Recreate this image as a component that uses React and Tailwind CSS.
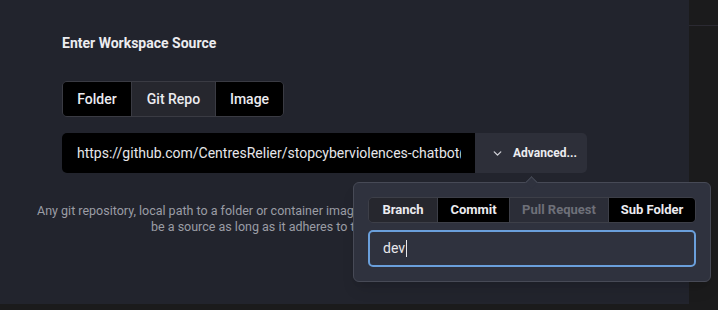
import React, { useState } from 'react';
import { ChevronDown } from 'lucide-react';

const font = { fontFamily: 'Roboto, "Noto Sans", sans-serif' };

function SourceTabs() {
    const [active, setActive] = useState('Git Repo');
    const tabs = [
        { name: 'Folder', w: 'w-[68px]' },
        { name: 'Git Repo', w: 'w-[84px]' },
        { name: 'Image', w: 'w-[68px]' },
    ];
    return (
        <div className="flex h-9 w-fit overflow-hidden rounded-[5px] border border-[#3a3b43]">
            {tabs.map((t, i) => (
                <button
                key={t.name}
                onClick={() => setActive(t.name)}
                className={
                    'text-[14px] font-medium text-[#ececf0] ' + t.w + ' ' +
                    (i > 0 ? 'border-l border-[#3a3b43] ' : '') +
                    (active === t.name ? 'bg-[#26272e]' : 'bg-black')
                }>
                    {t.name}
                </button>
            ))}
        </div>
    );
}

function AdvancedPopover() {
    const tabs = [
        { name: 'Branch', cls: 'w-[68px] bg-[#26272e] text-[#ececf0]' },
        { name: 'Commit', cls: 'w-[72px] bg-black text-[#ececf0]' },
        { name: 'Pull Request', cls: 'w-[99px] bg-[#2b2d37] text-[#6e7079]' },
        { name: 'Sub Folder', cls: 'flex-1 bg-black text-[#ececf0]' },
    ];
    return (
        <div className="absolute left-[-122px] top-[49px] z-10 w-[358px] rounded-[6px] border border-[#474a56] bg-[#2f323e] p-[14px] shadow-lg">
            <div className="absolute left-[173px] top-[-5px] h-[9px] w-[9px] rotate-45 border-l border-t border-[#474a56] bg-[#2f323e]" />
            <div className="flex h-[26px] overflow-hidden rounded-[5px] border border-[#3d3f48]">
                {tabs.map((t, i) => (
                    <div
                    key={t.name}
                    className={
                        'flex items-center justify-center text-[13px] font-bold ' +
                        (i > 0 ? 'border-l border-[#3d3f48] ' : '') +
                        t.cls
                    }>
                        {t.name}
                    </div>
                ))}
            </div>
            <div className="mt-[7px] flex h-[37px] items-center rounded-[5px] border-2 border-[#6a9fdb] bg-[#2f323e] px-[13px]">
                <span className="text-[14px] text-[#e8e8ec]">dev</span>
                <span className="ml-[1px] h-[17px] w-[1px] bg-[#e8e8ec]" />
            </div>
        </div>
    );
}

export default function App() {
    return (
        <div className="flex h-[310px] w-[718px] flex-col overflow-hidden bg-[#1b1b1c]" style={font}>
            <div className="flex flex-1">
                <div className="relative flex-1 bg-[#22242d] pl-[62px] pt-[33px]">
                    <h2 className="h-5 text-[14px] font-bold leading-5 text-[#ececf0]">Enter Workspace Source</h2>
                    <div className="mt-7">
                        <SourceTabs />
                    </div>
                    <div className="mt-4 flex h-10">
                        <div className="flex w-[413px] items-center overflow-hidden rounded-l-[5px] bg-black pl-[15px] pr-[14px]">
                            <span className="overflow-hidden whitespace-nowrap text-[14px] text-[#e6e6ea]">
                                https://github.com/CentresRelier/stopcyberviolences-chatbot@dev
                            </span>
                        </div>
                        <div className="relative">
                            <button className="flex h-10 w-[112px] items-center gap-[9px] rounded-r-[5px] bg-[#2d2f39] pl-[16px] text-[12px] font-bold text-[#ececf0]">
                                <ChevronDown size={13} strokeWidth={2.5} className="text-[#cfd0d6]" />
                                Advanced...
                            </button>
                            <AdvancedPopover />
                        </div>
                    </div>
                    <p className="-ml-[25px] mt-[30px] text-[12.5px] leading-4 text-[#9b9da5]">
                        <span className="block whitespace-nowrap">Any git repository, local path to a folder or container image can</span>
                        <span className="block whitespace-nowrap pl-[114px]">be a source as long as it adheres to the devcontainer standard.</span>
                    </p>
                </div>
                <div className="w-[29px] bg-[#1b1b1c]">
                    <div className="mt-[25px] h-[1px] bg-[#2b2a32]" />
                </div>
            </div>
            <div className="h-[6px] bg-[#1b1b1c]" />
        </div>
    );
}
